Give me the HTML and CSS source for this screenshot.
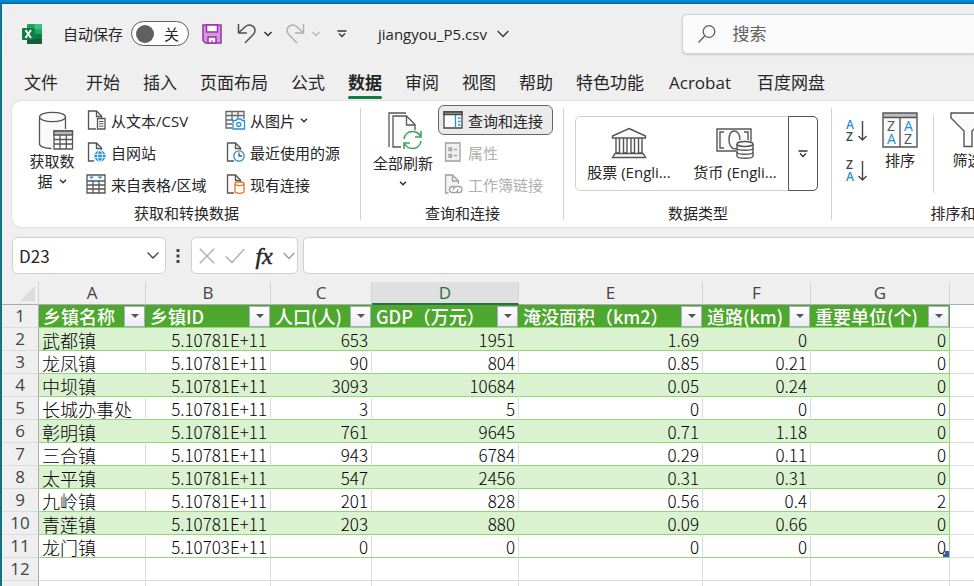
FILE: index.html
```html
<!DOCTYPE html>
<html lang="zh-CN">
<head>
<meta charset="utf-8">
<title>jiangyou_P5.csv</title>
<link rel="stylesheet" href="styles.css">
</head>
<body>
<div class="window">
  <header class="titlebar">
    <div class="quick-access">
      <svg class="app-icon" width="20" height="20" viewBox="0 0 20 20">
        <rect x="5" y="0" width="15" height="20" rx="1" fill="#21a366"/>
        <path d="M12.500 0H19a1 1 0 0 1 1 1v4.500h-7.500z" fill="#33c481"/>
        <path d="M5 5.500h7.500v5H5z" fill="#107c41"/>
        <path d="M5 14h15v5a1 1 0 0 1-1 1H6a1 1 0 0 1-1-1z" fill="#185c37"/>
        <path d="M12.500 10h7.500v5h-7.500z" fill="#107c41"/>
        <rect x="0" y="4" width="12.500" height="12" rx="1" fill="#107c41"/>
        <path d="M3.500 6 9 14M9 6 3.500 14" stroke="#fff" stroke-width="2"/>
      </svg>
      <label class="autosave-label" for="autosave">自动保存</label>
      <label class="switch" for="autosave"><input id="autosave" type="checkbox"><span>关</span></label>
      <button class="tool save" aria-label="保存">
        <svg width="20" height="20" viewBox="0 0 20 20" fill="#d59ade" stroke="#9b2fae" stroke-width="1.500">
          <path d="M1 1h18v18H3.500L1 16.500z"/><path d="M4.500 1h11v7h-11z" fill="#fafafa"/><path d="M6 19v-6h8v6z" fill="#fafafa"/><path d="M10 19v-3" stroke-width="1"/>
        </svg>
      </button>
      <button class="tool undo" aria-label="撤消">
        <svg width="20" height="22" viewBox="0 0 20 22" fill="none" stroke="#505050" stroke-width="1.500"><path d="M1.500 1v9h8.500M2 9.500 8.500 3.500C12 .5 18 2.500 18 7.500c0 2-1 3.300-2 4.300L8 20"/></svg>
      </button>
      <button class="tool undo-more" aria-label="撤消列表"><svg width="10" height="6" viewBox="0 0 10 6" fill="none" stroke="#333" stroke-width="1.500"><path d="M1.500 1 5 4.500 8.500 1"/></svg></button>
      <button class="tool redo" aria-label="恢复">
        <svg width="20" height="22" viewBox="0 0 20 22" fill="none" stroke="#b0b0b0" stroke-width="1.500"><path d="M18.500 1v9H10M18 9.500 11.500 3.500C8 .5 2 2.500 2 7.500c0 2 1 3.300 2 4.300L12 20"/></svg>
      </button>
      <button class="tool redo-more" aria-label="恢复列表"><svg width="10" height="6" viewBox="0 0 10 6" fill="none" stroke="#b8b8b8" stroke-width="1.500"><path d="M1.500 1 5 4.500 8.500 1"/></svg></button>
      <button class="tool customize" aria-label="自定义快速访问工具栏"><svg width="10" height="8" viewBox="0 0 10 8" fill="none" stroke="#333" stroke-width="1.300"><path d="M.5 1h9M2 3.500 5 6.500 8 3.500"/></svg></button>
      <button class="tool file-name">jiangyou_P5.csv<svg width="12" height="8" viewBox="0 0 12 8" fill="none" stroke="#333" stroke-width="1.300"><path d="M.7 1 6 6.500 11.300 1"/></svg></button>
    </div>
    <label class="search">
      <svg width="20" height="20" viewBox="0 0 20 20" fill="none" stroke="#606060" stroke-width="1.300"><circle cx="12" cy="7.500" r="5.800"/><path d="M7.800 11.700 1.500 18.500"/></svg>
      <input type="search" placeholder="搜索" aria-label="搜索">
    </label>
  </header>

  <nav class="tabs">
    <a class="file-tab" href="#">文件</a>
    <a href="#">开始</a>
    <a href="#">插入</a>
    <a href="#">页面布局</a>
    <a href="#">公式</a>
    <a href="#" class="active" aria-current="page">数据</a>
    <a href="#">审阅</a>
    <a href="#">视图</a>
    <a href="#">帮助</a>
    <a href="#">特色功能</a>
    <a class="addin-tab" href="#">Acrobat</a>
    <a href="#">百度网盘</a>
  </nav>

  <section class="ribbon">
    <div class="group group-get">
      <div class="commands">
        <button class="big get-data">
          <svg width="36" height="40" viewBox="0 0 36 40" fill="none" stroke="#555" stroke-width="1.300">
            <path d="M1.500 6v27c0 2.500 5 4.500 12 4.500h1V20h13V6" fill="#fafafa" stroke="none"/>
            <path d="M1.500 6v27c0 2.500 5 4.500 12 4.500M27.500 6v12"/><ellipse cx="14.500" cy="6" rx="13" ry="4.700" fill="#fafafa"/>
            <path d="M16 20h18.500v18H16z" fill="#fff"/><path d="M16 20h18.500v4H16z" fill="#b8b8b8"/><path d="M16 28.500h18.500M16 33h18.500M22 24v14M28.300 24v14"/>
          </svg>
          <span>获取数</span>
          <span>据<svg class="chev" width="8" height="5" viewBox="0 0 8 5"><path d="M1 .8 4 3.800 7 .8"/></svg></span>
        </button>
        <div class="stack">
          <button class="small">
            <svg width="20" height="20" viewBox="0 0 20 20" fill="none" stroke="#555" stroke-width="1.300"><path d="M10 19H2.500V1h8l5 5v2" fill="#fafafa"/><path d="M10.500 1v5.500h5"/><path d="M11.500 8.500h7.500v10.500h-7.500z" fill="#fff"/><path d="M13 11.500h4.500M13 13.800h4.500M13 16.200h4.500" stroke-width="1"/></svg>
            从文本/CSV
          </button>
          <button class="small">
            <svg width="20" height="20" viewBox="0 0 20 20" fill="none" stroke="#555" stroke-width="1.300"><path d="M8 19H2.500V1h8l5 5v2" fill="#fafafa"/><path d="M10.500 1v5.500h5"/><circle cx="14" cy="14" r="5.600" fill="#2490d8" stroke="none"/><g stroke="#fff" stroke-width=".9"><ellipse cx="14" cy="14" rx="2.400" ry="5.200"/><path d="M9 12.300h10M9 15.700h10"/></g></svg>
            自网站
          </button>
          <button class="small">
            <svg width="20" height="20" viewBox="0 0 20 20" fill="none" stroke="#555" stroke-width="1.300"><path d="M1 1h18v18H1z" fill="#fff"/><path d="M1 7h18M1 11h18M1 15h18M7 7v12M13 7v12"/><path d="M3 2.500h5L5.500 5zM11.500 2.500h5L14 5z" fill="#2490d8" stroke="none"/></svg>
            来自表格/区域
          </button>
        </div>
        <div class="stack">
          <button class="small">
            <svg width="20" height="20" viewBox="0 0 20 20" fill="none" stroke="#666" stroke-width="1.300"><path d="M7 18H1V1.500h18V9" fill="#fafafa"/><path d="M1 5.500h18M1 10h7M1 14h6M7 1.500V10M13 1.500V8"/><path d="M8 10.500h3l1-1.500h4l1 1.500h2.500V19H8z" fill="#fff" stroke="#2490d8"/><circle cx="13.800" cy="14.500" r="2" stroke="#2490d8"/></svg>
            从图片<svg class="chev" width="8" height="5" viewBox="0 0 8 5"><path d="M1 .8 4 3.800 7 .8"/></svg>
          </button>
          <button class="small">
            <svg width="20" height="20" viewBox="0 0 20 20" fill="none" stroke="#555" stroke-width="1.300"><path d="M9 19H2.500V1h8l5 5v2" fill="#fafafa"/><path d="M10.500 1v5.500h5"/><circle cx="14" cy="14" r="5.200" fill="#fff" stroke="#2490d8"/><path d="M14 10.500V14h3"/></svg>
            最近使用的源
          </button>
          <button class="small">
            <svg width="20" height="20" viewBox="0 0 20 20" fill="none" stroke="#555" stroke-width="1.300"><path d="M9 19H2.500V1h8l5 5v2" fill="#fafafa"/><path d="M10.500 1v5.500h5"/><path d="M10 9.800v7.700c0 2.400 9 2.400 9 0V9.800" fill="#fff" stroke="#e8731a"/><ellipse cx="14.500" cy="9.800" rx="4.500" ry="1.800" fill="#fff" stroke="#e8731a"/></svg>
            现有连接
          </button>
        </div>
      </div>
      <div class="group-label">获取和转换数据</div>
    </div>
    <div class="group group-query">
      <div class="commands">
        <button class="big refresh">
          <svg width="36" height="40" viewBox="0 0 36 40" fill="none" stroke="#555" stroke-width="1.300">
            <path d="M2 36V2h17"/><path d="M14 36H6V5h13.500l8.500 8.500V19" fill="#fafafa"/><path d="M19.500 5v9H28"/>
            <g stroke="#3fa45b" stroke-width="1.600"><path d="M17 28c.5-4.500 4-7.500 8.500-7.500 3.500 0 6.500 2 8 5M34 20v6h-6M34 30c-.5 4.500-4 7.500-8.500 7.500-3.500 0-6.500-2-8-5M17 38v-6h6"/></g>
          </svg>
          <span>全部刷新</span>
          <svg class="chev" width="8" height="5" viewBox="0 0 8 5"><path d="M1 .8 4 3.800 7 .8"/></svg>
        </button>
        <div class="stack">
          <button class="small pressed" aria-pressed="true">
            <svg width="20" height="20" viewBox="0 0 20 20" fill="none" stroke="#444" stroke-width="1.300"><path d="M1 2h18v16H1z" fill="#fff"/><path d="M1 2h18v2.500H1z" fill="#aaa"/><path d="M12.500 5v12.500" stroke="#2490d8"/><path d="M15 8h2.500M15 11.500h2.500M15 15h2.500" stroke="#2490d8" stroke-width="1.600"/></svg>
            查询和连接
          </button>
          <button class="small" disabled>
            <svg width="20" height="20" viewBox="0 0 20 20" fill="#f0f0f0" stroke="#a0a0a0" stroke-width="1.300"><path d="M2.500 1h14.500v18H2.500z"/><path d="M6 6h2.500v2.500H6zM6 12.500h2.500V15H6zM11 7.500h3M11 13.500h3"/></svg>
            属性
          </button>
          <button class="small" disabled>
            <svg width="20" height="20" viewBox="0 0 20 20" fill="none" stroke="#a0a0a0" stroke-width="1.300"><path d="M5.500 19H2.500V1h7l6 6v3" fill="#f2f2f2"/><path d="M9.500 1v6h6"/><path d="M12 12.500h-2.500a3 3 0 0 0 0 6H12a3 3 0 0 0 2.800-3.500M13.500 18.500h2.500a3 3 0 0 0 0-6h-2.500a3 3 0 0 0-2.800 3.500" fill="none"/></svg>
            工作簿链接
          </button>
        </div>
      </div>
      <div class="group-label">查询和连接</div>
    </div>
    <div class="group group-types">
      <div class="commands">
        <div class="gallery">
          <button class="type-item">
            <svg width="36" height="32" viewBox="0 0 36 32" fill="#fafafa" stroke="#555" stroke-width="1.400"><path d="M18 1.500 34.500 9v2h-33V9zM5 11h3.500v15H5zM12.500 11h3.500v15h-3.500zM20 11h3.500v15H20zM27.500 11H31v15h-3.500z"/><path d="M4 26.500h28l2.500 4h-33z"/></svg>
            股票 (Engli...
          </button>
          <button class="type-item">
            <svg width="38" height="32" viewBox="0 0 38 32" fill="none" stroke="#555" stroke-width="1.400"><path d="M20 24H1V2h34v12" fill="#fafafa"/><path d="M8 5H4v16h4M28 5h4v8M20 21.500c-3.500 1.500-7-2.500-7-8.500s2.500-9 5.500-9 5.500 3.500 5.500 9"/><g fill="#fff"><path d="M21 17v12c0 3 16 3 16 0V17"/><ellipse cx="29" cy="17" rx="8" ry="2.500"/></g><path d="M21 21c0 3 16 3 16 0M21 25c0 3 16 3 16 0"/></svg>
            货币 (Engli...
          </button>
          <button class="gallery-more" aria-label="其他数据类型"><svg width="10" height="8" viewBox="0 0 10 8" fill="none" stroke="#333" stroke-width="1.300"><path d="M.5 1h9M2 3.500 5 6.500 8 3.500"/></svg></button>
        </div>
      </div>
      <div class="group-label">数据类型</div>
    </div>
    <div class="group group-sort">
      <div class="commands">
        <div class="order">
          <button aria-label="升序"><svg width="22" height="24" viewBox="0 0 22 24"><text x="0" y="10" fill="#2490d8">A</text><text x="0" y="22" fill="#444">Z</text><path d="M16.500 2v19M12.500 17l4 4 4-4" fill="none" stroke="#444" stroke-width="1.400"/></svg></button>
          <button aria-label="降序"><svg width="22" height="24" viewBox="0 0 22 24"><text x="0" y="10" fill="#444">Z</text><text x="0" y="22" fill="#2490d8">A</text><path d="M16.500 2v19M12.500 17l4 4 4-4" fill="none" stroke="#444" stroke-width="1.400"/></svg></button>
        </div>
        <button class="big sort">
          <svg width="36" height="40" viewBox="0 0 36 40"><path d="M1 3h34v34H1z" fill="#fafafa"/><path d="M1 3h34v4.500H1z" fill="#bdbdbd"/><path d="M1 3h34v34H1zM1 7.500h34M18 7.500V37" fill="none" stroke="#555" stroke-width="1.400"/><g class="glyphs"><text x="5" y="21" fill="#555">Z</text><text x="5" y="34" fill="#2490d8">A</text><text x="22" y="21" fill="#2490d8">A</text><text x="22" y="34" fill="#555">Z</text></g></svg>
          <span>排序</span>
        </button>
        <button class="big filter">
          <svg width="36" height="40" viewBox="0 0 36 40"><path d="M1 3h34v5L22 21v15.500h-8V21L1 8z" fill="#fafafa" stroke="#555" stroke-width="1.400"/></svg>
          <span>筛选</span>
        </button>
      </div>
      <div class="group-label">排序和筛选</div>
    </div>
  </section>

  <div class="formula-bar">
    <div class="name-box">
      <input type="text" value="D23" aria-label="名称框">
      <svg width="14" height="9" viewBox="0 0 14 9" fill="none" stroke="#444" stroke-width="1.400"><path d="M1.500 1.500 7 7 12.500 1.500"/></svg>
    </div>
    <svg class="grip" width="4" height="14" viewBox="0 0 4 14" fill="#444"><path d="M.5 0h3v3h-3zM.5 5.500h3v3h-3zM.5 11h3v3h-3z"/></svg>
    <div class="edit-tools">
      <button aria-label="取消"><svg width="16" height="16" viewBox="0 0 16 16" fill="none" stroke="#aaa" stroke-width="1.300"><path d="M.8.8l14.400 14.400M15.200.8.8 15.200"/></svg></button>
      <button aria-label="输入"><svg width="20" height="16" viewBox="0 0 20 16" fill="none" stroke="#aaa" stroke-width="1.300"><path d="M.7 8.500 7 14.500 19.300 1"/></svg></button>
      <button class="fx" aria-label="插入函数">fx</button>
      <button aria-label="函数列表"><svg width="12" height="8" viewBox="0 0 12 8" fill="none" stroke="#999" stroke-width="1.300"><path d="M.7 1 6 6.500 11.300 1"/></svg></button>
    </div>
    <input class="formula" type="text" aria-label="编辑栏">
  </div>

  <main class="sheet">
    <table>
      <colgroup><col class="c-num"><col class="c-a"><col class="c-b"><col class="c-c"><col class="c-d"><col class="c-e"><col class="c-f"><col class="c-g"><col></colgroup>
      <thead>
        <tr><th class="corner"><svg width="15" height="15" viewBox="0 0 15 15"><path d="M15 0v15H0z" fill="#dcdcdc"/></svg></th><th>A</th><th>B</th><th>C</th><th class="selected">D</th><th>E</th><th>F</th><th>G</th><th></th></tr>
      </thead>
      <tbody>
        <tr class="fields"><th>1</th>
          <td><div>乡镇名称<button aria-label="筛选乡镇名称"></button></div></td>
          <td><div>乡镇ID<button aria-label="筛选乡镇ID"></button></div></td>
          <td><div>人口(人)<button aria-label="筛选人口"></button></div></td>
          <td><div>GDP（万元）<button aria-label="筛选GDP"></button></div></td>
          <td><div>淹没面积（km2）<button aria-label="筛选淹没面积"></button></div></td>
          <td><div>道路(km)<button aria-label="筛选道路"></button></div></td>
          <td><div>重要单位(个)<button aria-label="筛选重要单位"></button></div></td>
          <td></td></tr>
        <tr class="data"><th>2</th><td>武都镇</td><td>5.10781E+11</td><td>653</td><td>1951</td><td>1.69</td><td>0</td><td>0</td><td></td></tr>
        <tr class="data"><th>3</th><td>龙凤镇</td><td>5.10781E+11</td><td>90</td><td>804</td><td>0.85</td><td>0.21</td><td>0</td><td></td></tr>
        <tr class="data"><th>4</th><td>中坝镇</td><td>5.10781E+11</td><td>3093</td><td>10684</td><td>0.05</td><td>0.24</td><td>0</td><td></td></tr>
        <tr class="data"><th>5</th><td>长城办事处</td><td>5.10781E+11</td><td>3</td><td>5</td><td>0</td><td>0</td><td>0</td><td></td></tr>
        <tr class="data"><th>6</th><td>彰明镇</td><td>5.10781E+11</td><td>761</td><td>9645</td><td>0.71</td><td>1.18</td><td>0</td><td></td></tr>
        <tr class="data"><th>7</th><td>三合镇</td><td>5.10781E+11</td><td>943</td><td>6784</td><td>0.29</td><td>0.11</td><td>0</td><td></td></tr>
        <tr class="data"><th>8</th><td>太平镇</td><td>5.10781E+11</td><td>547</td><td>2456</td><td>0.31</td><td>0.31</td><td>0</td><td></td></tr>
        <tr class="data"><th>9</th><td>九岭镇</td><td>5.10781E+11</td><td>201</td><td>828</td><td>0.56</td><td>0.4</td><td>2</td><td></td></tr>
        <tr class="data"><th>10</th><td>青莲镇</td><td>5.10781E+11</td><td>203</td><td>880</td><td>0.09</td><td>0.66</td><td>0</td><td></td></tr>
        <tr class="data"><th>11</th><td>龙门镇</td><td>5.10703E+11</td><td>0</td><td>0</td><td>0</td><td>0</td><td class="table-end">0</td><td></td></tr>
        <tr><th>12</th><td></td><td></td><td></td><td></td><td></td><td></td><td></td><td></td></tr>
        <tr><th></th><td></td><td></td><td></td><td></td><td></td><td></td><td></td><td></td></tr>
      </tbody>
    </table>
  </main>
</div>
</body>
</html>
```
FILE: styles.css
```css
* { box-sizing: border-box; }

body {
  margin: 0;
  height: 100vh;
  overflow: hidden;
  padding: 3px 0 0 1px;
  background: linear-gradient(#0090e0, #0078d0 3px, #0a74b0 60px, #0a74a6);
  font-family: "Open Sans", "Noto Sans CJK SC", sans-serif;
  font-size: 15px;
  color: #262626;
}

button, input {
  font: inherit;
  color: inherit;
  background: none;
  border: 0;
  padding: 0;
  margin: 0;
  outline: 0;
}

svg { display: block; flex: none; overflow: visible; }

.window {
  display: flex;
  flex-direction: column;
  height: 100%;
  overflow: hidden;
  background: #efefef;
  border-top: 1px solid #0f6f50;
  border-left: 1px solid #1b7058;
}

/* Title bar */
.titlebar { display: flex; align-items: center; flex: none; height: 59px; }
.quick-access { display: flex; align-items: center; flex: 0 0 70%; padding-left: 20px; }
.tool { display: flex; align-items: center; white-space: nowrap; }
.autosave-label { margin-left: 21px; }
.switch {
  display: flex;
  align-items: center;
  justify-content: space-between;
  width: 58px;
  height: 25px;
  margin-left: 8px;
  padding: 0 9px 0 4px;
  border: 1px solid #606060;
  border-radius: 13px;
  background: #fff;
}
.switch input {
  appearance: none;
  width: 18px;
  height: 18px;
  border-radius: 50%;
  background: #606060;
}
.save { margin-left: 13px; }
.undo { margin-left: 15px; }
.undo-more, .redo-more { margin-left: 6px; }
.redo { margin-left: 12px; }
.customize { margin-left: 16px; }
.file-name { gap: 10px; margin-left: 31px; }
.search {
  display: flex;
  align-items: center;
  flex: 1;
  gap: 15px;
  height: 40px;
  padding-left: 14px;
  font-size: 17px;
  background: #fafafa;
  border: 1px solid #d2d2d2;
  border-right: 0;
  border-radius: 5px 0 0 5px;
  box-shadow: 0 1px 2px #c8c8c8;
}
.search input { flex: 1; min-width: 0; }
.search input::placeholder { color: #616161; opacity: 1; }

/* Ribbon tabs */
.tabs {
  display: flex;
  flex: none;
  gap: 23px;
  height: 38px;
  padding: 2px 0 0 22px;
  font-size: 17px;
  white-space: nowrap;
}
.tabs a {
  position: relative;
  color: inherit;
  line-height: 36px;
  text-decoration: none;
}
.tabs .file-tab { margin-right: 5px; }
.tabs .addin-tab { margin: 0 3px 0 2px; }
.tabs .active { font-weight: 700; }
.tabs .active::after {
  content: "";
  position: absolute;
  left: 0;
  right: 0;
  bottom: 2px;
  height: 3px;
  border-radius: 2px;
  background: #107c41;
}

/* Ribbon */
.ribbon {
  display: flex;
  flex: none;
  margin-left: 10px;
  padding: 3px 0 1px;
  overflow: hidden;
  background: #fff;
  border-radius: 9px 0 0 9px;
  box-shadow: 0 0 2px #c8c8c8;
}
.group { position: relative; flex: none; }
.group:not(:last-child)::after {
  content: "";
  position: absolute;
  top: 4px;
  right: 0;
  bottom: 6px;
  width: 1px;
  background: #d0d0d0;
}
.commands { display: grid; height: 96px; }
.group-label { line-height: 26px; text-align: center; }
.group-get .commands { grid-template-columns: 62px 139px 115px; padding: 0 21px 0 12px; }
.group-query .commands { grid-template-columns: 67px 116px; padding: 0 10px; }
.group-types .commands { padding: 12px 14px 9px 11px; }
.group-sort { width: 272px; }
.group-sort .commands { display: flex; padding-left: 14px; }

.big {
  display: flex;
  flex-direction: column;
  align-items: center;
  justify-self: start;
  width: 56px;
  padding-top: 7px;
  line-height: 20px;
  white-space: nowrap;
}
.big span { display: flex; align-items: center; gap: 6px; }
.get-data > svg { margin-left: 8px; }
.chev { fill: none; stroke: #333; stroke-width: 1.5; }
.refresh { width: 64px; gap: 2px; }
.refresh > svg:first-child { margin-left: 4px; }
.refresh .chev { margin-top: 6px; }
.stack { display: flex; flex-direction: column; align-items: flex-start; }
.small {
  display: flex;
  align-items: center;
  gap: 5px;
  height: 32px;
  white-space: nowrap;
}
.group-query .small { padding: 0 9px 0 5px; }
.small:disabled { color: #b0b0b0; }
.pressed {
  height: 30px;
  margin: 1px 0;
  border: 1px solid #666;
  border-radius: 6px;
  background: #ebebeb;
}
.group-query .pressed { padding: 0 9px 0 4px; }

.gallery {
  display: grid;
  grid-template-columns: 106px 106px 29px;
  border: 1px solid #d0d0d0;
  border-radius: 5px;
}
.type-item {
  display: flex;
  flex-direction: column;
  align-items: center;
  justify-content: flex-end;
  gap: 3px;
  padding-bottom: 8px;
  line-height: 20px;
  white-space: nowrap;
}
.gallery-more {
  display: grid;
  place-items: center;
  margin: -1px -1px -1px 0;
  border: 1px solid #555;
  border-radius: 0 5px 5px 0;
}

.order { display: flex; flex-direction: column; gap: 16px; padding-top: 15px; }
.order text { font: 600 12px "Open Sans", sans-serif; }
.glyphs text { font: 14px "Open Sans", sans-serif; }
.sort { width: 64px; padding-top: 6px; }
.filter { width: 69px; margin: 0 0 0 1px; padding-top: 6px; }
.sort + .filter { background: linear-gradient(#d0d0d0, #d0d0d0) 0 11px / 1px 78px no-repeat; }

/* Formula bar */
.formula-bar {
  display: flex;
  align-items: center;
  flex: none;
  padding: 10px 0 8px 10px;
}
.name-box, .edit-tools, .formula {
  height: 37px;
  background: #fff;
  border: 1px solid #d0d0d0;
  border-radius: 5px;
}
.name-box {
  display: flex;
  align-items: center;
  width: 154px;
  padding: 0 5px 0 6px;
  font-size: 17px;
}
.name-box input { flex: 1; min-width: 0; font-family: "Noto Sans CJK SC", sans-serif; }
.grip { margin: 0 11px 0 10px; }
.edit-tools {
  display: flex;
  align-items: center;
  width: 107px;
  padding: 0 2px 0 7px;
  justify-content: space-between;
}
.fx { font: italic 24px "Liberation Serif", serif; line-height: 24px; -webkit-text-stroke: 0.5px #262626; }
.formula { flex: 1; min-width: 0; margin-left: 5px; border-right: 0; border-radius: 5px 0 0 5px; }

/* Worksheet */
.sheet { flex: 1; min-height: 0; overflow: hidden; }
.sheet table {
  width: 100%;
  table-layout: fixed;
  border-collapse: separate;
  border-spacing: 0;
}
.c-num { width: 37px; }
.c-a { width: 107px; }
.c-b { width: 125px; }
.c-c { width: 101px; }
.c-d { width: 147px; }
.c-e { width: 184px; }
.c-f { width: 108px; }
.c-g { width: 139px; }
.sheet tr { height: 23px; }
.sheet th, .sheet td {
  height: 23px;
  padding: 0;
  line-height: 22px;
  white-space: nowrap;
}
.sheet th { font-size: 17px; font-weight: 400; color: #444; }
.sheet thead th {
  border-right: 1px solid #d4d4d4;
  border-bottom: 1px solid #ababab;
}
.sheet thead th:last-child { border-right: 0; }
.sheet thead .selected {
  line-height: 21px;
  color: #217346;
  background: #e0e0e0;
  border-bottom: 2px solid #217346;
}
.sheet .corner { padding-left: 18px; }
.sheet tbody th {
  border-right: 1px solid #ababab;
  border-bottom: 1px solid #dcdcdc;
}
.sheet td {
  background: #fff;
  border-right: 1px solid #dcdcdc;
  border-bottom: 1px solid #dcdcdc;
  color: #000;
}
.sheet td:last-child { border-right: 0; }

.sheet .data td {
  padding: 2px 3px 0 0;
  font-family: "Noto Sans CJK SC", sans-serif;
  font-size: 17px;
  font-weight: 300;
  line-height: 20px;
  text-align: right;
}
.sheet .data td:nth-child(2) { padding-left: 3px; font-size: 18px; text-align: left; }
.sheet .data td:nth-child(8) { border-right-color: #8ed973; }
.data td:not(:last-child) { border-bottom-color: #8ed973; }
.data:nth-child(even) td:not(:last-child) { background: #daf2d0; }
.data:nth-child(even) td:not(:nth-child(n + 8)) { border-right-color: #daf2d0; }
.sheet .table-end { position: relative; }
.table-end::after {
  content: "";
  position: absolute;
  right: 0;
  bottom: 0;
  width: 6px;
  height: 6px;
  background: linear-gradient(#4455b5, #4455b5) right / 4px 6px no-repeat, linear-gradient(#4455b5, #4455b5) bottom / 6px 3px no-repeat;
}

.fields td:not(:last-child) {
  color: #fff;
  font: 500 18px "Noto Sans CJK SC", sans-serif;
  line-height: 22px;
  background: #4ea72e;
  border-right-color: #4ea72e;
  border-bottom-color: #8ed973;
}
.fields div {
  display: flex;
  align-items: center;
  justify-content: space-between;
  height: 22px;
  padding-left: 4px;
}
.fields button {
  display: grid;
  place-items: center;
  flex: none;
  width: 21px;
  height: 21px;
  border: 1px solid #a9aeba;
  background: linear-gradient(#fff, #e9ecf2);
}
.fields button::before {
  content: "";
  border: 4px solid transparent;
  border-top-color: #555;
  border-bottom: 0;
}
```
